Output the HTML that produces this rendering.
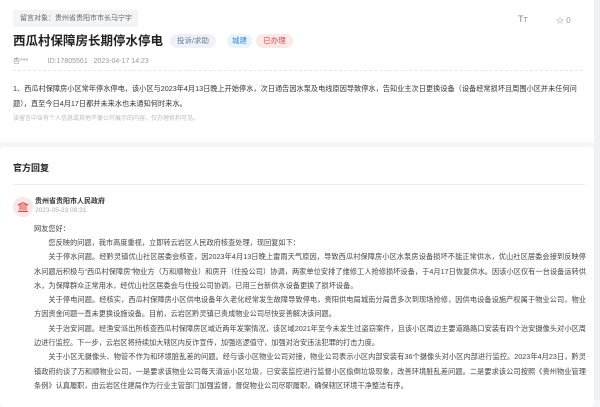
<!DOCTYPE html>
<html><head><meta charset="utf-8"><style>
*{margin:0;padding:0;box-sizing:border-box}
body{width:600px;height:400px;overflow:hidden;background:#f5f6f8;font-family:"Liberation Sans","Noto Sans CJK SC",sans-serif;position:relative}
.card{position:absolute;left:0;width:594px;background:#fff}
.abs{position:absolute;white-space:nowrap}
.tag{position:absolute;height:14px;line-height:14px;font-size:7.5px;border-radius:7px;text-align:center}
.body{position:absolute;left:34px;top:89px;width:552px;font-size:7.2px;line-height:14.3px;color:#444}
.body p{text-align:justify;text-indent:14.4px}
</style></head><body>
<div class="card" style="top:0;height:142px">
  <div class="abs" style="left:13px;top:10px;width:125px;height:17px;background:#f3f4f6;font-size:7px;line-height:17px;padding-left:7px;color:#666">留言对象：贵州省贵阳市市长马宁宇</div>
  <div class="abs" style="left:13px;top:31px;font-size:12.5px;font-weight:bold;color:#222;line-height:20px">西瓜村保障房长期停水停电</div>
  <div class="tag" style="left:170px;top:34px;width:46px;background:#eef2f8;color:#6b7a99">投诉/求助</div>
  <div class="tag" style="left:227px;top:34px;width:25px;background:#e8f3fc;color:#3d8ad8">城建</div>
  <div class="tag" style="left:256px;top:34px;width:37px;background:#fde8e8;color:#e04848">已办理</div>
  <div class="abs" style="left:518px;top:14px;font-size:9px;color:#888">T<span style="font-size:7px">T</span></div>
  <div class="abs" style="left:556px;top:15px;font-size:8px;color:#999">☆ 0</div>
  <div class="abs" style="left:13px;top:56px;font-size:7px;color:#999">杏***&nbsp;&nbsp;&nbsp;&nbsp;&nbsp;&nbsp;&nbsp;&nbsp;&nbsp;&nbsp;ID:17805561&nbsp;&nbsp;&nbsp;2023-04-17 14:23</div>
  <div class="abs" style="left:13px;top:70px;width:570px;border-top:1px dashed #e6e6e6"></div>
  <div class="abs" style="left:13px;top:81px;width:574px;white-space:normal;font-size:7.2px;line-height:15px;color:#333">1、西瓜村保障房小区常年停水停电，该小区与2023年4月13日晚上开始停水，次日通告因水泵及电线原因导致停水，告知业主次日更换设备（设备经常损坏且周围小区并未任何问题），直至今日4月17日都并未来水也未通知何时来水。</div>
  <div class="abs" style="left:13px;top:113px;font-size:6px;color:#bbb">该留言中含有个人信息或其他不便公开展示的内容，仅办理机构可见。</div>
</div>
<div class="card" style="top:147px;height:260px;border-radius:4px">
  <div class="abs" style="left:13px;top:14px;font-size:9px;font-weight:bold;color:#222">官方回复</div>
  <div class="abs" style="left:13px;top:37px;width:572px;border-top:1px solid #eee"></div>
  <div class="abs" style="left:13px;top:50px;width:20px;height:20px;border-radius:50%;background:#fce6e6"></div>
  <svg class="abs" style="left:17px;top:54px" width="12" height="12" viewBox="0 0 12 12" fill="none" stroke="#d84a4a" stroke-width="1"><path d="M1 4 L6 1.5 L11 4 Z M1 10.5 H11 M3 5v4.5 M5 5v4.5 M7 5v4.5 M9 5v4.5"/></svg>
  <div class="abs" style="left:35px;top:49px;font-size:7px;font-weight:bold;color:#333">贵州省贵阳市人民政府</div>
  <div class="abs" style="left:35px;top:60px;font-size:6.5px;color:#aaa">2023-05-23 09:31</div>
  <div class="abs" style="left:34px;top:77px;font-size:7.2px;color:#444">网友您好：</div>
  <div class="body">
  <p>您反映的问题，我市高度重视，立即转云岩区人民政府核查处理，现回复如下：</p>
  <p>关于停水问题。经黔灵镇优山社区居委会核查，因2023年4月13日晚上雷雨天气原因，导致西瓜村保障房小区水泵房设备损坏不能正常供水，优山社区居委会接到反映停水问题后积极与“西瓜村保障房”物业方（万和顺物业）和房开（住投公司）协调，两家单位安排了维修工人抢修损坏设备，于4月17日恢复供水。因该小区仅有一台设备运转供水，为保障群众正常用水，经优山社区居委会与住投公司协调，已用三台新供水设备更换了损坏设备。</p>
  <p>关于停电问题。经核实，西瓜村保障房小区供电设备年久老化经常发生故障导致停电，贵阳供电局城南分局曾多次到现场抢修，因供电设备设施产权属于物业公司，物业方因资金问题一直未更换设施设备。目前，云岩区黔灵镇已责成物业公司尽快妥善解决该问题。</p>
  <p>关于治安问题。经渔安派出所核查西瓜村保障房区域近两年发案情况，该区域2021年至今未发生过盗窃案件，且该小区周边主要道路路口安装有四个治安摄像头对小区周边进行监控。下一步，云岩区将持续加大辖区内反诈宣传，加强巡逻值守，加强对治安违法犯罪的打击力度。</p>
  <p>关于小区无摄像头、物管不作为和环境脏乱差的问题。经与该小区物业公司对接，物业公司表示小区内部安装有36个摄像头对小区内部进行监控。2023年4月23日，黔灵镇政府约谈了万和顺物业公司，一是要求该物业公司每天清运小区垃圾，已安装监控进行监督小区偷倒垃圾现象，改善环境脏乱差问题。二是要求该公司按照《贵州物业管理条例》认真履职，由云岩区住建局作为行业主管部门加强监督，督促物业公司尽职履职，确保辖区环境干净整洁有序。</p>
  </div>
</div>
<div class="abs" style="left:594px;top:0;width:6px;height:400px;background:#f0f1f3"></div>
</body></html>
